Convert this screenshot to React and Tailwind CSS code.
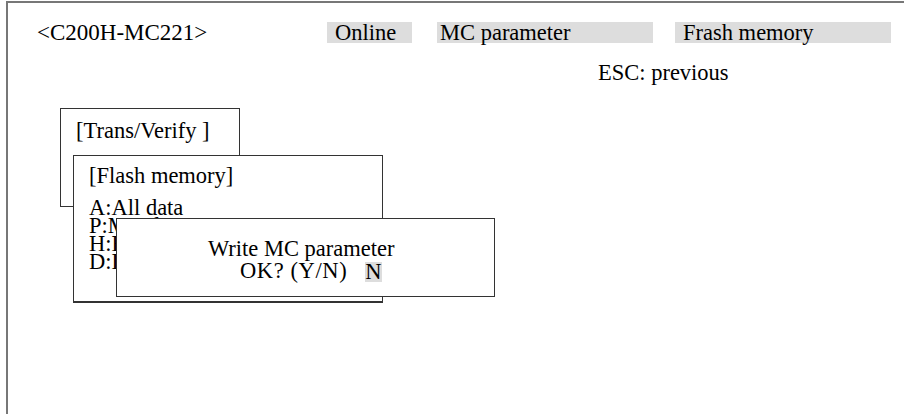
import React from "react";

// small helper for the overlapping screen windows
function Win({ className, children }) {
  return (
    <div className={`absolute bg-white border border-[#333] ${className}`}>
      {children}
    </div>
  );
}

function App() {
  return (
    <div
      className="relative w-[904px] h-[414px] bg-white overflow-hidden text-black text-[22.5px]"
      style={{ fontFamily: '"Liberation Serif", "Times New Roman", serif' }}
    >
      <div className="ml-[6px] mt-[1px] h-full border-l-2 border-t-2 border-[#777]">
        {/* header */}
        <div className="flex items-start mt-[19px] leading-[21px]">
          <div className="w-[319px] pl-[29px] whitespace-nowrap text-[23px]">&lt;C200H-MC221&gt;</div>
          <div className="w-[85px] h-[21px] bg-[#dddddd] pl-[8px]">Online</div>
          <div className="w-[216px] h-[21px] bg-[#dddddd] ml-[25px] pl-[3px]">MC parameter</div>
          <div className="w-[216px] h-[21px] bg-[#dddddd] ml-[22px] pl-[8px]">Frash memory</div>
        </div>
        <div className="mt-[19px] pl-[590px] leading-[21px]">ESC: previous</div>
      </div>

      {/* windows */}
      <Win className="left-[60px] top-[108px] w-[180px] h-[99px] pt-[11px] pl-[15px] leading-[21px]">
        [Trans/Verify ]
      </Win>

      <Win className="left-[73px] top-[155px] w-[310px] h-[148px] pt-[9px] pl-[15px] border-b-2">
        <div className="leading-[21px]">[Flash memory]</div>
        <div className="mt-[13px] leading-[18px]">
          <div>A:All data</div>
          <div>P:MC data</div>
          <div>H:Home</div>
          <div>D:Data</div>
        </div>
      </Win>

      <Win className="left-[116px] top-[218px] w-[379px] h-[79px] pt-[19px] leading-[22px]">
        <div className="pl-[91px] whitespace-nowrap">Write MC parameter</div>
        <div className="flex items-start pl-[123px]">
          <span className="tracking-[0.6px]">OK? (Y/N)</span>
          <span className="ml-[18px] mt-[2px] h-[20px] leading-[20px] bg-[#dddddd]">N</span>
        </div>
      </Win>
    </div>
  );
}

export default App;
